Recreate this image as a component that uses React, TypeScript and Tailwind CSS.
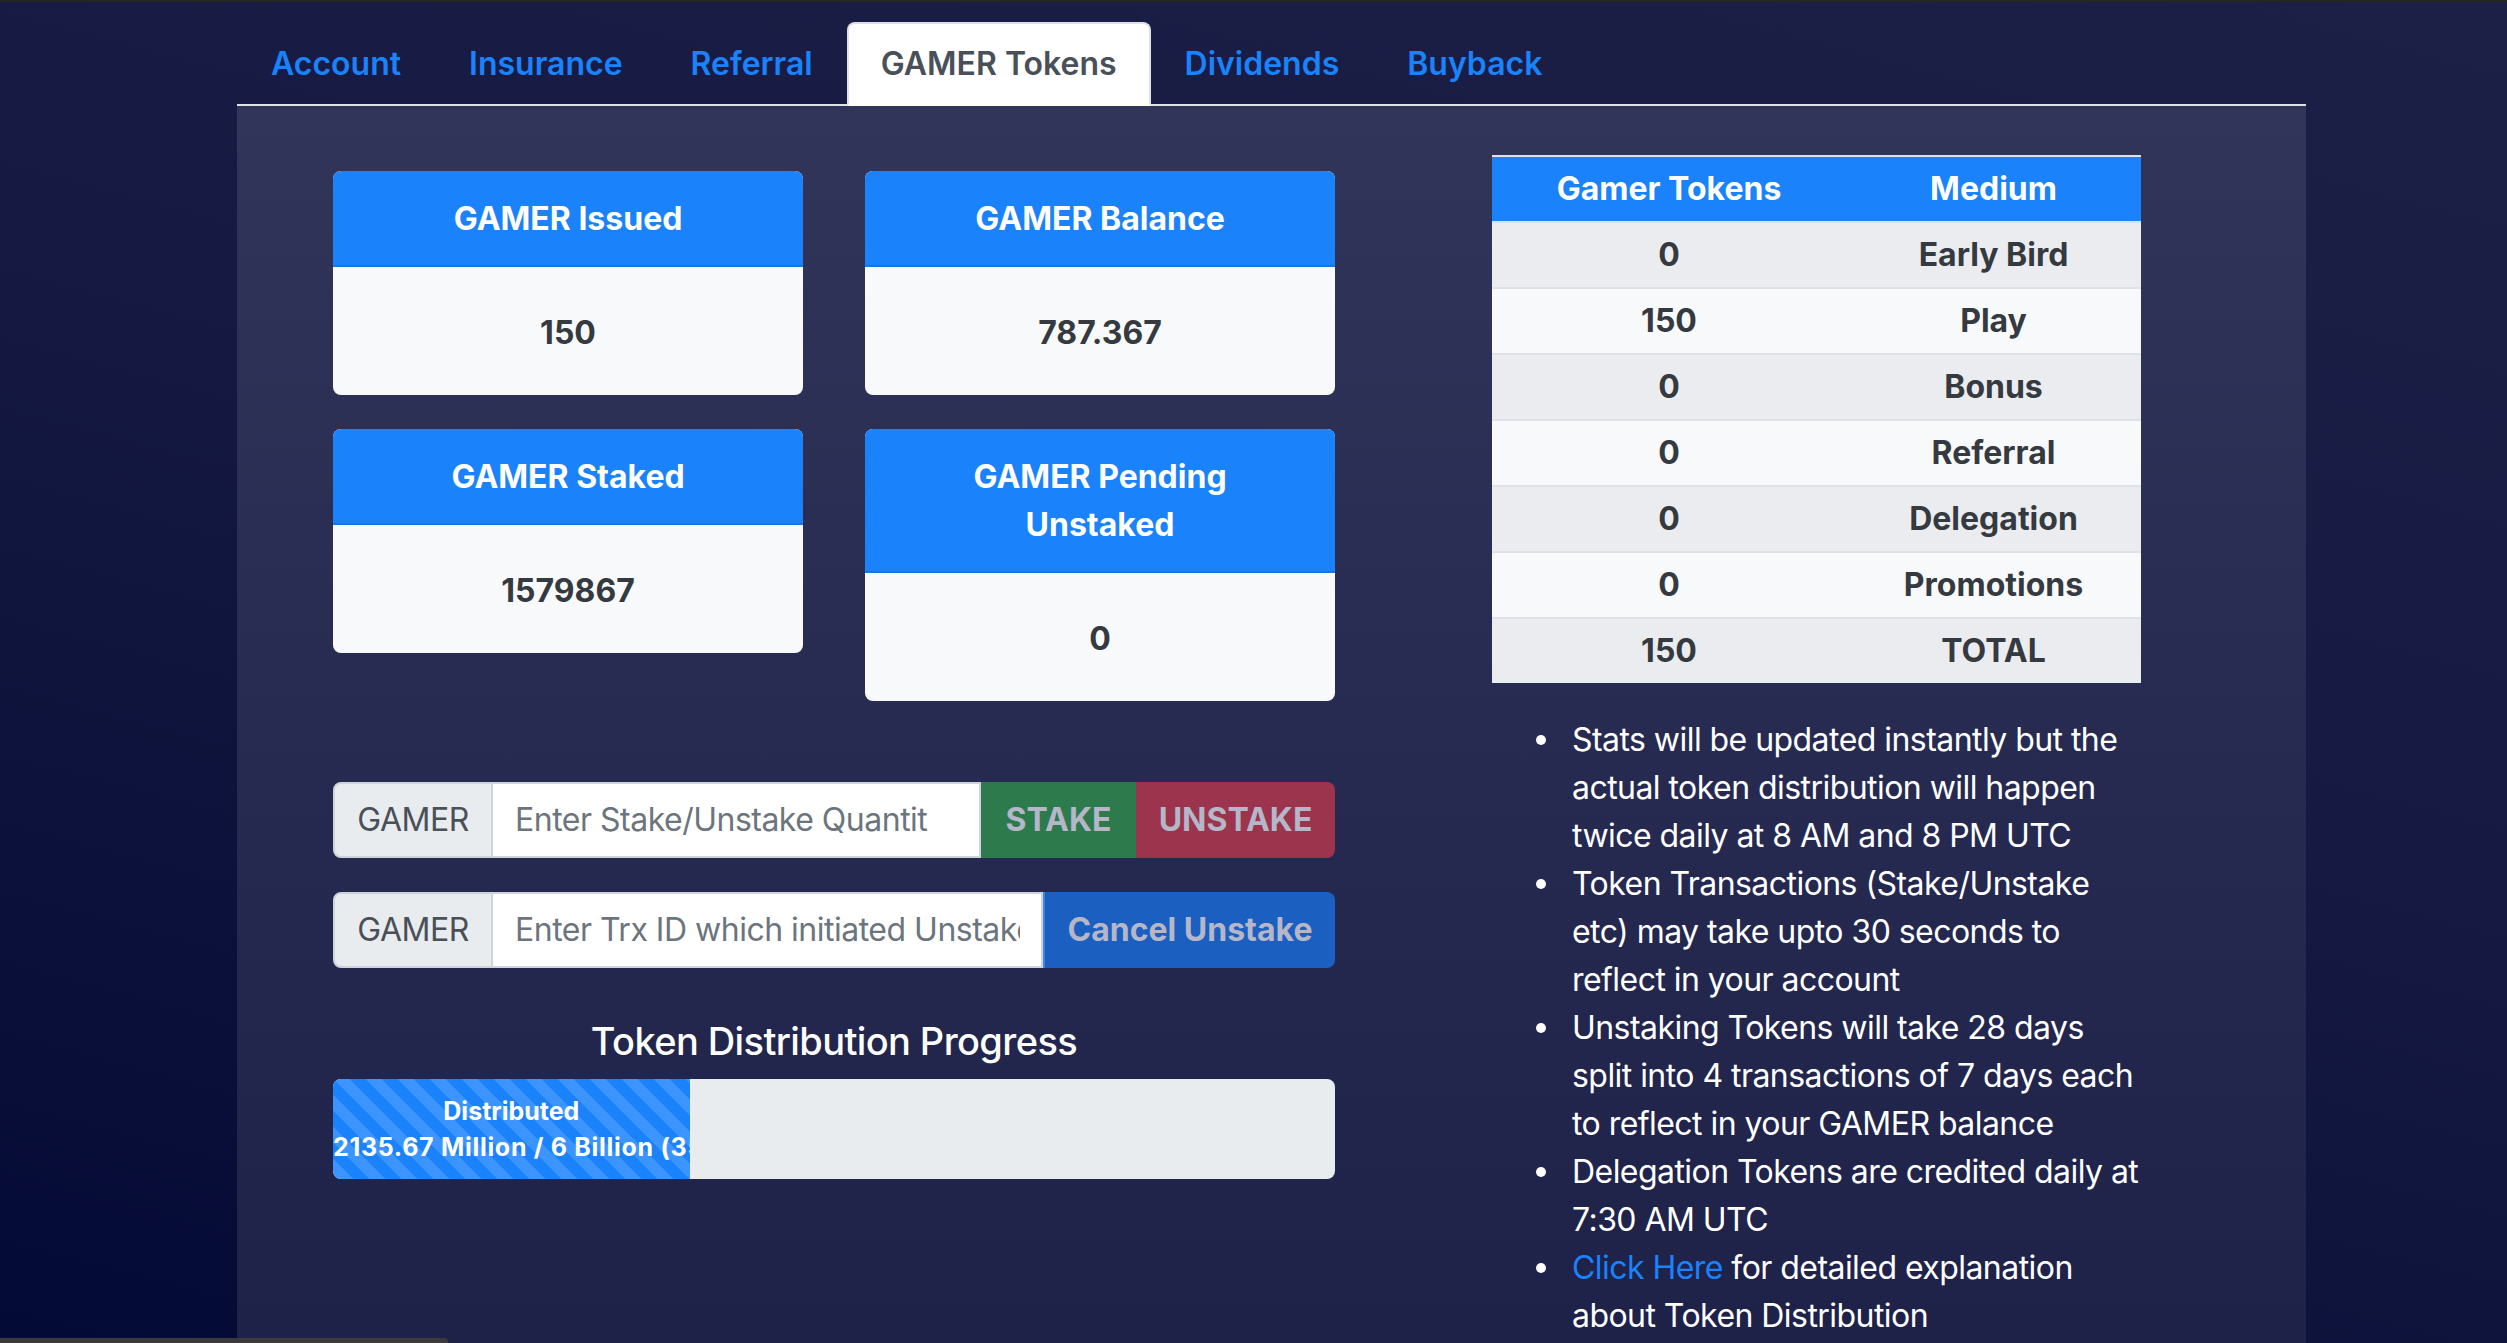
import React from "react";

const tabs = ["Account", "Insurance", "Referral", "GAMER Tokens", "Dividends", "Buyback"];

const rows: [string, string][] = [
  ["0", "Early Bird"],
  ["150", "Play"],
  ["0", "Bonus"],
  ["0", "Referral"],
  ["0", "Delegation"],
  ["0", "Promotions"],
  ["150", "TOTAL"],
];

function Card({ title, value }: { title: React.ReactNode; value: string }) {
  return (
    <div className="rounded-[8px] overflow-hidden bg-[#f8f9fa]">
      <div className="bg-[#1a82fb] border-b-2 border-[#1776e6] px-[40px] pt-[24px] pb-[22px] text-center text-white font-bold text-[32px] leading-[48px]">
        {title}
      </div>
      <div className="pt-[42px] pb-[38px] text-center text-[#343a40] font-bold text-[32px] leading-[48px]">{value}</div>
    </div>
  );
}

export default function App() {
  const pct = (2135.67 / 6000) * 100;
  return (
    <div className="relative w-[2507px] h-[1343px] overflow-hidden bg-[linear-gradient(195deg,#1c2047_0%,#161a42_45%,#030a35_100%)] font-['Inter','Liberation_Sans',sans-serif]">
      <div className="h-[2px] bg-[#262626]" />
      <div className="ml-[237px] w-[2069px] flex flex-col h-[1341px]">
        <nav className="flex items-start pt-[20px] border-b-2 border-[#dee2e6]">
          {tabs.map((t) => {
            const active = t === "GAMER Tokens";
            return (
              <div
                key={t}
                className={
                  active
                    ? "px-[32px] py-[16px] -mb-[2px] text-[32px] leading-[48px] font-semibold text-[#495057] bg-white rounded-t-[8px] border-2 border-[#dee2e6] border-b-white"
                    : "px-[32px] py-[16px] -mb-[2px] text-[32px] leading-[48px] font-semibold text-[#1a82fb] border-2 border-transparent"
                }
              >
                {t}
              </div>
            );
          })}
        </nav>
        <div className="flex-1 flex bg-[linear-gradient(180deg,#31355a_0%,#262a50_55%,#1e2148_100%)] pl-[96px]">
          <div className="w-[1002px] pt-[65px]">
            <div className="grid grid-cols-2 gap-x-[62px] gap-y-[34px] items-start">
              <Card title="GAMER Issued" value="150" />
              <Card title="GAMER Balance" value="787.367" />
              <Card title="GAMER Staked" value="1579867" />
              <Card
                title={
                  <>
                    GAMER Pending
                    <br />
                    Unstaked
                  </>
                }
                value="0"
              />
            </div>

            <div className="mt-[81px] flex h-[76px] text-[32px] leading-[48px] tracking-[-0.5px]">
              <div className="w-[160px] shrink-0 flex items-center justify-center bg-[#e9ecef] text-[#495057] border-2 border-[#ced4da] rounded-l-[8px]">
                GAMER
              </div>
              <input
                className="w-[488px] shrink-0 bg-white border-2 border-l-0 border-[#ced4da] pl-[22px] pr-[50px] text-[#495057] placeholder:text-[#6c757d] outline-none"
                placeholder="Enter Stake/Unstake Quantity"
              />
              <div className="w-[155px] shrink-0 flex items-center justify-center bg-[#2d7a4c] text-[#b5b7c9] font-bold tracking-normal">
                STAKE
              </div>
              <div className="flex-1 flex items-center justify-center bg-[#9b344c] text-[#b5b7c9] font-bold rounded-r-[8px] tracking-normal">
                UNSTAKE
              </div>
            </div>

            <div className="mt-[34px] flex h-[76px] text-[32px] leading-[48px] tracking-[-0.5px]">
              <div className="w-[160px] shrink-0 flex items-center justify-center bg-[#e9ecef] text-[#495057] border-2 border-[#ced4da] rounded-l-[8px]">
                GAMER
              </div>
              <input
                className="w-[550px] shrink-0 bg-white border-2 border-l-0 border-[#ced4da] pl-[22px] pr-[21px] text-[#495057] placeholder:text-[#6c757d] outline-none"
                placeholder="Enter Trx ID which initiated Unstake"
              />
              <div className="flex-1 flex items-center justify-center bg-[#1b5fc1] border-l-2 border-[#3a86e0] text-[#b5b7c9] font-bold rounded-r-[8px] tracking-normal">
                Cancel Unstake
              </div>
            </div>

            <div className="mt-[49px] text-center text-white font-medium text-[38px] leading-[48px] tracking-[-0.6px]">
              Token Distribution Progress
            </div>

            <div className="mt-[14px] h-[100px] rounded-[8px] bg-[#e9ecef] overflow-hidden flex">
              <div
                className="h-full bg-[#1a82fb] bg-[linear-gradient(45deg,rgba(255,255,255,0.15)_25%,transparent_25%,transparent_50%,rgba(255,255,255,0.15)_50%,rgba(255,255,255,0.15)_75%,transparent_75%,transparent)] bg-[length:32px_32px] flex flex-col justify-center overflow-hidden whitespace-nowrap text-center text-white font-bold text-[25px] leading-[36px]"
                style={{ width: `${pct}%` }}
              >
                <div>Distributed</div>
                <div className="tracking-[0.7px]">2135.67 Million / 6 Billion (35.59%)</div>
              </div>
            </div>
          </div>

          <div className="ml-[157px] w-[649px] pt-[49px]">
            <div className="border-t-2 border-[#dee2e6]">
              <div className="grid grid-cols-[354px_295px] h-[64px] bg-[#1a82fb] text-white font-bold text-[32px] leading-[48px] items-center text-center">
                <div>Gamer Tokens</div>
                <div>Medium</div>
              </div>
              {rows.map(([a, b], i) => (
                <div
                  key={b}
                  className={
                    "grid grid-cols-[354px_295px] h-[66px] border-t-2 border-[#dee2e6] items-center text-center text-[#343a40] font-bold text-[32px] leading-[48px] " +
                    (i % 2 === 0 ? "bg-[#ebecef]" : "bg-[#f8f9fa]")
                  }
                >
                  <div>{a}</div>
                  <div>{b}</div>
                </div>
              ))}
            </div>

            <ul className="mt-[33px] pl-[44px] text-white text-[32px] leading-[48px] whitespace-nowrap tracking-[-0.55px]">
              {[
                [
                  "Stats will be updated instantly but the",
                  "actual token distribution will happen",
                  "twice daily at 8 AM and 8 PM UTC",
                ],
                [
                  "Token Transactions (Stake/Unstake",
                  "etc) may take upto 30 seconds to",
                  "reflect in your account",
                ],
                [
                  "Unstaking Tokens will take 28 days",
                  "split into 4 transactions of 7 days each",
                  "to reflect in your GAMER balance",
                ],
                ["Delegation Tokens are credited daily at", "7:30 AM UTC"],
              ].map((lines, i) => (
                <li key={i} className="flex">
                  <span className="w-[36px] shrink-0 flex h-[48px] items-center">
                    <span className="w-[10px] h-[10px] rounded-full bg-white" />
                  </span>
                  <span>
                    {lines.map((l, j) => (
                      <span key={j} className="block">
                        {l}
                      </span>
                    ))}
                  </span>
                </li>
              ))}
              <li className="flex">
                <span className="w-[36px] shrink-0 flex h-[48px] items-center">
                  <span className="w-[10px] h-[10px] rounded-full bg-white" />
                </span>
                <span>
                  <span className="block">
                    <a className="text-[#1a82fb]" href="#">
                      Click Here
                    </a>{" "}
                    for detailed explanation
                  </span>
                  <span className="block">about Token Distribution</span>
                </span>
              </li>
            </ul>
          </div>
        </div>
      </div>
      <div className="absolute left-0 bottom-0 w-[448px] h-[5px] bg-[#3a3a3a] rounded-tr-[4px]" />
    </div>
  );
}
